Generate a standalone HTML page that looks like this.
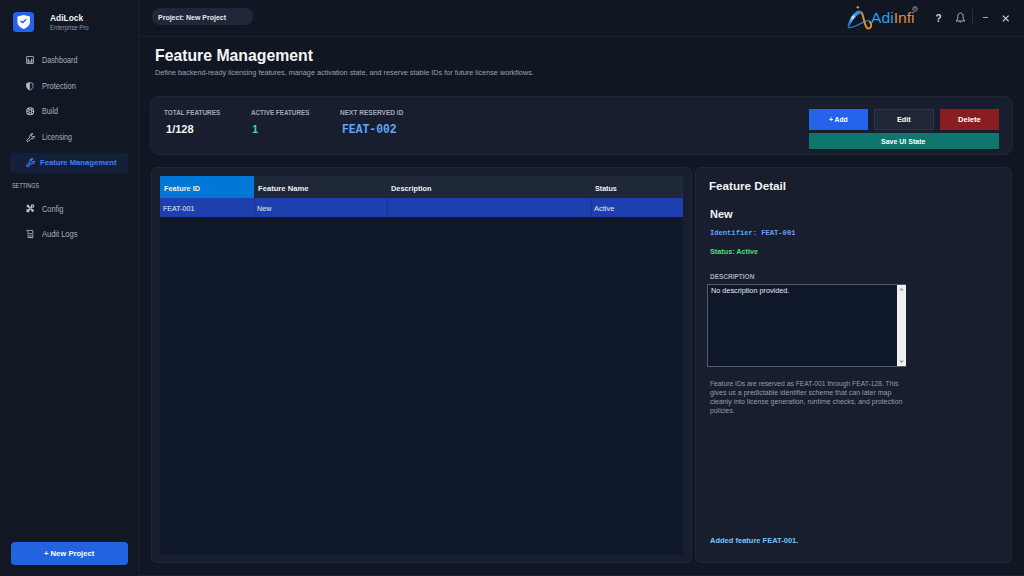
<!DOCTYPE html>
<html><head><meta charset="utf-8">
<style>
*{box-sizing:border-box;margin:0;padding:0}
html,body{width:1024px;height:576px;overflow:hidden;background:#111722;font-family:"Liberation Sans",sans-serif;color:#e5e7eb}
.abs{position:absolute}
.t{position:absolute;white-space:nowrap;line-height:1}
.card{position:absolute;background:#181e2d;border:1px solid #1f2637;border-radius:9px}
svg{overflow:visible}
</style></head><body>
<div class="abs" style="left:0px;top:0px;width:139px;height:576px;background:#111723;"></div>
<div class="abs" style="left:137.5px;top:0px;width:2px;height:576px;background:#161c2a;"></div>
<div class="abs" style="left:13.2px;top:12px;width:20.4px;height:20px;background:#2563eb;border-radius:3.5px"></div>
<svg class="abs" style="left:13px;top:12px" width="20" height="20" viewBox="0 0 20 20"><path d="M10.7 2.9 L16.9 4.5 V10 C16.9 13.3 14.2 15.7 10.7 16.9 C7.2 15.7 4.5 13.3 4.5 10 V4.5 Z" fill="#fff"/><path d="M7.9 9.3 L9.9 10.6 L12.8 7.6" stroke="#2563eb" stroke-width="1.4" fill="none" stroke-linecap="round" stroke-linejoin="round"/></svg>
<div class="t" style="left:50px;top:13.00px;font-size:9.6px;color:#f3f4f6;font-weight:bold;transform:scaleX(0.8741);transform-origin:0 0;">AdiLock</div>
<div class="t" style="left:50px;top:24.00px;font-size:7.2px;color:#8e96a4;transform:scaleX(0.8423);transform-origin:0 0;">Enterprise Pro</div>
<div class="t" style="left:42px;top:56.00px;font-size:8.6px;color:#a9b1bf;transform:scaleX(0.8422);transform-origin:0 0;">Dashboard</div>
<div class="t" style="left:42px;top:82.00px;font-size:8.6px;color:#a9b1bf;transform:scaleX(0.8742);transform-origin:0 0;">Protection</div>
<div class="t" style="left:42px;top:107.00px;font-size:8.6px;color:#a9b1bf;transform:scaleX(0.8384);transform-origin:0 0;">Build</div>
<div class="t" style="left:42px;top:133.00px;font-size:8.6px;color:#a9b1bf;transform:scaleX(0.8236);transform-origin:0 0;">Licensing</div>
<div class="abs" style="left:10px;top:153px;width:118px;height:20px;background:#14203a;border-radius:4px"></div>
<div class="t" style="left:40px;top:159.00px;font-size:8px;color:#3b82f6;font-weight:bold;transform:scaleX(0.9555);transform-origin:0 0;">Feature Management</div>
<div class="t" style="left:11.8px;top:182.00px;font-size:7px;color:#b3b9c4;transform:scaleX(0.7720);transform-origin:0 0;">SETTINGS</div>
<div class="t" style="left:42px;top:205.00px;font-size:8.6px;color:#a9b1bf;transform:scaleX(0.8627);transform-origin:0 0;">Config</div>
<div class="t" style="left:42px;top:230.00px;font-size:8.6px;color:#a9b1bf;transform:scaleX(0.8723);transform-origin:0 0;">Audit Logs</div>
<svg class="abs" style="left:26px;top:56px" width="8" height="8" viewBox="0 0 16 16"><rect x="1" y="1" width="14" height="14" rx="1" fill="none" stroke="#b4bfce" stroke-width="1.6"/><rect x="3.2" y="5.5" width="2.4" height="8.5" fill="#b4bfce"/><rect x="6.8" y="9" width="2.4" height="5" fill="#b4bfce" opacity="0.8"/><rect x="10.4" y="5.5" width="2.4" height="8.5" fill="#b4bfce"/></svg>
<svg class="abs" style="left:26.3px;top:81.6px" width="7.6" height="8.6" viewBox="0 0 16 18"><path d="M8 1 L14.8 3.2 V8.5 C14.8 12.6 11.8 15.6 8 17 C4.2 15.6 1.2 12.6 1.2 8.5 V3.2 Z" fill="none" stroke="#b4bfce" stroke-width="1.6"/><path d="M8 1 L1.2 3.2 V8.5 C1.2 12.6 4.2 15.6 8 17 Z" fill="#b4bfce"/></svg>
<svg class="abs" style="left:26px;top:107px" width="8.4" height="8.4" viewBox="0 0 16 16"><circle cx="8" cy="8" r="7.6" fill="#b4bfce"/><circle cx="8" cy="8" r="1.8" fill="#111723"/><circle cx="8.00" cy="3.30" r="1.55" fill="#111723"/><circle cx="12.07" cy="5.65" r="1.55" fill="#111723"/><circle cx="12.07" cy="10.35" r="1.55" fill="#111723"/><circle cx="8.00" cy="12.70" r="1.55" fill="#111723"/><circle cx="3.93" cy="10.35" r="1.55" fill="#111723"/><circle cx="3.93" cy="5.65" r="1.55" fill="#111723"/></svg>
<svg class="abs" style="left:25.8px;top:133.2px" width="9" height="9" viewBox="0 0 16 16"><path d="M11 1.2 C8.4 1.2 6.4 3.4 6.7 6 C6.8 6.6 6.9 7 7.1 7.4 L1.9 12.5 C1.1 13.3 1.1 14.3 1.8 15 C2.5 15.7 3.5 15.6 4.2 14.9 L9.2 9.8 C9.7 10 10.3 10.2 10.9 10.2 C13.3 10.2 15.1 8.2 15 5.8 L12.2 6.9 L10 5.7 L9.6 3.2 L12.4 1.4 C11.9 1.3 11.5 1.2 11 1.2 Z" fill="none" stroke="#b4bfce" stroke-width="1.7" stroke-linejoin="round"/></svg>
<svg class="abs" style="left:25.8px;top:158.0px" width="9" height="9" viewBox="0 0 16 16"><path d="M11 1.2 C8.4 1.2 6.4 3.4 6.7 6 C6.8 6.6 6.9 7 7.1 7.4 L1.9 12.5 C1.1 13.3 1.1 14.3 1.8 15 C2.5 15.7 3.5 15.6 4.2 14.9 L9.2 9.8 C9.7 10 10.3 10.2 10.9 10.2 C13.3 10.2 15.1 8.2 15 5.8 L12.2 6.9 L10 5.7 L9.6 3.2 L12.4 1.4 C11.9 1.3 11.5 1.2 11 1.2 Z" fill="none" stroke="#3b82f6" stroke-width="1.9" stroke-linejoin="round"/></svg>
<svg class="abs" style="left:25.8px;top:204px" width="8.6" height="8.6" viewBox="0 0 16 16"><path d="M3 3 L13 13 M13 3 L3 13" stroke="#b4bfce" stroke-width="3"/><path d="M0.6 3.6 L3.6 0.6 L7 4 L4 7 Z" fill="#b4bfce"/><circle cx="12.2" cy="3.8" r="3.4" fill="#b4bfce"/><circle cx="12.2" cy="3.8" r="1.1" fill="#111723"/><rect x="0.6" y="9.6" width="5.8" height="5.8" rx="1.5" fill="#b4bfce"/><path d="M9 12.2 L12.2 9 L15.4 12.2 L12.2 15.4 Z" fill="#b4bfce"/><path d="M6.5 6.5 L9.5 9.5" stroke="#111723" stroke-width="0.8"/></svg>
<svg class="abs" style="left:26px;top:230px" width="8" height="8" viewBox="0 0 16 16"><path d="M0.8 2.2 C0.8 1.2 1.5 0.8 2.5 0.8 H13.6 V15.2 H4.2 V2.6 C4.2 1.7 3.6 1.2 2.6 1.3" fill="none" stroke="#b4bfce" stroke-width="1.6"/><path d="M6.4 7 H11.6 M6.4 10.4 H11.6" stroke="#b4bfce" stroke-width="1.5"/><path d="M4.2 14.4 H13.6" stroke="#b4bfce" stroke-width="1.8"/></svg>
<div class="abs" style="left:11px;top:542px;width:117px;height:23.4px;background:#2363e0;border-radius:4px"></div>
<div class="t" style="left:44.1px;top:550.00px;font-size:8px;color:#ffffff;font-weight:bold;transform:scaleX(0.9539);transform-origin:0 0;">+ New Project</div>
<div class="abs" style="left:139px;top:36px;width:885px;height:1px;background:#19202f;"></div>
<div class="abs" style="left:139px;top:575px;width:885px;height:1px;background:#1a2030;"></div>
<div class="abs" style="left:152px;top:8px;width:101px;height:17px;background:#1e2838;border-radius:8px"></div>
<div class="t" style="left:158px;top:14.00px;font-size:7.2px;color:#e8ebf0;font-weight:bold;transform:scaleX(0.9729);transform-origin:0 0;">Project: New Project</div>
<svg class="abs" style="left:845px;top:4px" width="30" height="26" viewBox="0 0 30 26">
<defs><linearGradient id="lg1" x1="0" y1="1" x2="0.6" y2="0"><stop offset="0" stop-color="#1c4f8f"/><stop offset="0.45" stop-color="#4aa6e8"/><stop offset="0.6" stop-color="#cfe8fa"/><stop offset="0.75" stop-color="#3d9ee6"/><stop offset="1" stop-color="#2a8ad8"/></linearGradient></defs>
<path d="M2.5 23.5 C3.2 16.5 8.5 8 13.5 6.6 C16 6 17.8 7.6 18 9.6 C14.5 8.6 10 12.5 7.2 17.2 C5.6 19.8 4.5 22 4 24 Z" fill="url(#lg1)"/>
<path d="M3.2 23.6 C8.5 24.2 15 19.5 20.5 17.2 C23.5 16 25.5 17 26 19" fill="none" stroke="#2b78c2" stroke-width="1.3"/>
<path d="M16.8 8.8 C18.6 12.5 19 18 20.8 22 C22 24.8 24.2 25.4 25.6 23.2 C26.7 21.4 26.2 18.6 24.2 17.6" fill="none" stroke="#e08a35" stroke-width="2"/>
<circle cx="12.8" cy="3.2" r="1.3" fill="#ec7b2a"/>
</svg>
<div class="t" style="left:871.4px;top:10.00px;font-size:15.4px;color:#2d9fe3;transform:scaleX(1.0173);transform-origin:0 0;"><span style="color:#2d9fe3">Adi</span><span style="color:#da8a3c">Infi</span></div>
<svg class="abs" style="left:911.5px;top:5.5px" width="6" height="6" viewBox="0 0 6 6"><circle cx="3" cy="3" r="2.3" fill="none" stroke="#9aa3ad" stroke-width="0.8"/><text x="3" y="4.3" font-size="3.4" text-anchor="middle" fill="#9aa3ad" font-family="Liberation Sans">R</text></svg>
<div class="t" style="left:935.5px;top:14.00px;font-size:10px;color:#cdd5e0;font-weight:bold;">?</div>
<svg class="abs" style="left:955px;top:12px" width="11" height="11" viewBox="0 0 11 11"><path d="M5.5 1 C3.6 1 2.8 2.6 2.8 4.4 V6.8 L1.2 9 H9.8 L8.2 6.8 V4.4 C8.2 2.6 7.4 1 5.5 1 Z" fill="none" stroke="#b9c2cf" stroke-width="0.9" stroke-linejoin="round"/><path d="M4.4 9.6 C4.6 10.2 6.4 10.2 6.6 9.6" stroke="#b9c2cf" stroke-width="0.8" fill="none"/></svg>
<div class="abs" style="left:972px;top:9px;width:1px;height:16px;background:#262d3b;"></div>
<div class="abs" style="left:982.5px;top:17px;width:5px;height:1px;background:#a3abb8;"></div>
<svg class="abs" style="left:1001.5px;top:14.5px" width="7.5" height="7" viewBox="0 0 7.5 7"><path d="M0.8 0.6 L6.7 6.4 M6.7 0.6 L0.8 6.4" stroke="#cdd5e0" stroke-width="1.2"/></svg>
<div class="t" style="left:154.5px;top:48.00px;font-size:16.6px;color:#f5f6f8;font-weight:bold;transform:scaleX(0.9513);transform-origin:0 0;">Feature Management</div>
<div class="t" style="left:155px;top:69.00px;font-size:7.27px;color:#9aa2b0;">Define backend-ready licensing features, manage activation state, and reserve stable IDs for future license workflows.</div>
<div class="card" style="left:150px;top:96px;width:862.5px;height:58.5px"></div>
<div class="t" style="left:164.4px;top:109.00px;font-size:7.6px;color:#a1a9b7;font-weight:bold;transform:scaleX(0.8399);transform-origin:0 0;">TOTAL FEATURES</div>
<div class="t" style="left:250.9px;top:109.00px;font-size:7.6px;color:#a1a9b7;font-weight:bold;transform:scaleX(0.8295);transform-origin:0 0;">ACTIVE FEATURES</div>
<div class="t" style="left:339.8px;top:109.00px;font-size:7.6px;color:#a1a9b7;font-weight:bold;transform:scaleX(0.8594);transform-origin:0 0;">NEXT RESERVED ID</div>
<div class="t" style="left:165.9px;top:124.00px;font-size:11px;color:#f3f4f6;font-weight:bold;transform:scaleX(1.0050);transform-origin:0 0;">1/128</div>
<div class="t" style="left:252.3px;top:124.00px;font-size:10.5px;color:#4ade80;font-weight:bold;">1</div>
<div class="t" style="left:341.6px;top:124.00px;font-size:12.2px;color:#60a5fa;font-weight:bold;font-family:'Liberation Mono',monospace;transform:scaleX(0.9336);transform-origin:0 0;">FEAT-002</div>
<div class="abs" style="left:809px;top:109px;width:59px;height:20.5px;background:#2563eb;"></div>
<div class="abs" style="left:874.3px;top:109px;width:59.5px;height:20.5px;background:#1f2736;border:1px solid #2c3546;box-sizing:border-box"></div>
<div class="abs" style="left:940px;top:109px;width:59px;height:20.5px;background:#891d1f;"></div>
<div class="abs" style="left:809px;top:132.7px;width:190px;height:16.3px;background:#0f766e;"></div>
<div class="t" style="left:828.9px;top:116.00px;font-size:7.6px;color:#fff;font-weight:bold;transform:scaleX(0.8914);transform-origin:0 0;">+ Add</div>
<div class="t" style="left:896.6px;top:116.00px;font-size:7.6px;color:#fff;font-weight:bold;transform:scaleX(0.9570);transform-origin:0 0;">Edit</div>
<div class="t" style="left:957.5px;top:116.00px;font-size:7.6px;color:#fff;font-weight:bold;transform:scaleX(1.0020);transform-origin:0 0;">Delete</div>
<div class="t" style="left:881.2px;top:138.00px;font-size:7.6px;color:#fff;font-weight:bold;transform:scaleX(0.9224);transform-origin:0 0;">Save UI State</div>
<div class="card" style="left:151px;top:167px;width:541px;height:395.5px;border-radius:6px"></div>
<div class="abs" style="left:160px;top:176px;width:523px;height:379px;background:#0f172a;"></div>
<div class="abs" style="left:160px;top:176px;width:523px;height:22px;background:#1f2838;"></div>
<div class="abs" style="left:160px;top:176px;width:94.4px;height:22px;background:#0078d7;"></div>
<div class="abs" style="left:160px;top:198px;width:523px;height:19px;background:#1e3fae;"></div>
<div class="abs" style="left:254px;top:198px;width:1px;height:19px;background:#1a3590;"></div>
<div class="abs" style="left:387.4px;top:198px;width:1px;height:19px;background:#1a3590;"></div>
<div class="abs" style="left:591.4px;top:198px;width:1px;height:19px;background:#1a3590;"></div>
<div class="t" style="left:163.6px;top:185.00px;font-size:7.6px;color:#eef0f3;font-weight:bold;transform:scaleX(0.9698);transform-origin:0 0;">Feature ID</div>
<div class="t" style="left:257.8px;top:185.00px;font-size:7.6px;color:#eef0f3;font-weight:bold;transform:scaleX(1.0038);transform-origin:0 0;">Feature Name</div>
<div class="t" style="left:391.2px;top:185.00px;font-size:7.6px;color:#eef0f3;font-weight:bold;transform:scaleX(0.9673);transform-origin:0 0;">Description</div>
<div class="t" style="left:595.2px;top:185.00px;font-size:7.6px;color:#eef0f3;font-weight:bold;transform:scaleX(0.9398);transform-origin:0 0;">Status</div>
<div class="t" style="left:162.8px;top:205.00px;font-size:7.6px;color:#e8ecf5;transform:scaleX(0.9339);transform-origin:0 0;">FEAT-001</div>
<div class="t" style="left:256.9px;top:205.00px;font-size:7.6px;color:#e8ecf5;transform:scaleX(0.9493);transform-origin:0 0;">New</div>
<div class="t" style="left:594px;top:205.00px;font-size:7.6px;color:#e8ecf5;transform:scaleX(0.9881);transform-origin:0 0;">Active</div>
<div class="card" style="left:695px;top:167px;width:316.5px;height:395.5px;border-radius:6px"></div>
<div class="t" style="left:708.7px;top:180.00px;font-size:11.6px;color:#f3f4f6;font-weight:bold;transform:scaleX(1.0037);transform-origin:0 0;">Feature Detail</div>
<div class="t" style="left:710.3px;top:209.00px;font-size:11px;color:#f3f4f6;font-weight:bold;transform:scaleX(1.0019);transform-origin:0 0;">New</div>
<div class="t" style="left:709.7px;top:229.00px;font-size:8px;color:#60a5fa;font-weight:bold;font-family:'Liberation Mono',monospace;transform:scaleX(0.8897);transform-origin:0 0;">Identifier: FEAT-001</div>
<div class="t" style="left:709.7px;top:248.00px;font-size:7.6px;color:#4ade80;font-weight:bold;transform:scaleX(0.9557);transform-origin:0 0;">Status: Active</div>
<div class="t" style="left:709.8px;top:273.00px;font-size:7.6px;color:#a1a9b7;font-weight:bold;transform:scaleX(0.8547);transform-origin:0 0;">DESCRIPTION</div>
<div class="abs" style="left:707px;top:284px;width:199px;height:83px;background:#0f172a;border:1px solid #555b66;box-sizing:border-box"></div>
<div class="abs" style="left:896.5px;top:285px;width:9px;height:81px;background:#f0f0f0;"></div>
<svg class="abs" style="left:896.5px;top:285px" width="9" height="81" viewBox="0 0 9 81"><path d="M2.2 5.5 L4.5 2.8 L6.8 5.5 Z" fill="#a3a3a3"/><path d="M2.2 75.5 L4.5 78.2 L6.8 75.5 Z" fill="#a3a3a3"/></svg>
<div class="t" style="left:710.7px;top:287.00px;font-size:7.6px;color:#e8ebf0;transform:scaleX(0.9571);transform-origin:0 0;">No description provided.</div>
<div class="t" style="left:709.7px;top:380.00px;font-size:7.0px;color:#959dab;transform:scaleX(0.9621);transform-origin:0 0;">Feature IDs are reserved as FEAT-001 through FEAT-128. This</div>
<div class="t" style="left:709.7px;top:389.00px;font-size:7.0px;color:#959dab;transform:scaleX(1.0049);transform-origin:0 0;">gives us a predictable identifier scheme that can later map</div>
<div class="t" style="left:709.7px;top:398.00px;font-size:7.0px;color:#959dab;transform:scaleX(0.9970);transform-origin:0 0;">cleanly into license generation, runtime checks, and protection</div>
<div class="t" style="left:709.7px;top:407.00px;font-size:7.0px;color:#959dab;transform:scaleX(0.9771);transform-origin:0 0;">policies.</div>
<div class="t" style="left:710px;top:537.00px;font-size:7.6px;color:#7cc4f8;font-weight:bold;transform:scaleX(0.9895);transform-origin:0 0;">Added feature FEAT-001.</div>
</body></html>
